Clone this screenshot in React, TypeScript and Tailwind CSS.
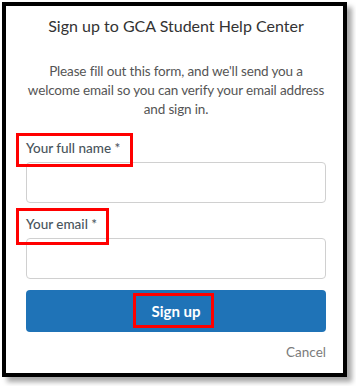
import React from 'react';

function Field({ label, boxW, boxH, boxTop, mt }: { label: string; boxW: number; boxH: number; boxTop: number; mt: string }) {
  return (
    <div className={mt}>
      <div className="relative h-[20px] leading-[20px] text-[13.5px] font-[500] text-[#49545c]">
        {label}
        <span
          className="absolute left-[-10px] border-[3px] border-[#ff0000] pointer-events-none"
          style={{ width: boxW, height: boxH, top: boxTop }}
        />
      </div>
      <input
        type="text"
        className="mt-[4px] block w-full h-[41px] rounded-[4px] border border-[#d0d0d0] bg-white outline-none"
      />
    </div>
  );
}

export default function App() {
  return (
    <div className="w-[356px] h-[386px] bg-white pt-[2px] pl-[2px]" style={{ fontFamily: 'Lato, "Open Sans", sans-serif' }}>
      <div className="w-[345px] h-[375px] border-[4px] border-black bg-white shadow-[5px_5px_5px_rgba(0,0,0,0.35)] pl-[20px] pr-[17px]">
        <h1 className="pt-[8px] text-center text-[16px] leading-[24px] text-[#333333]">
          Sign up to GCA Student Help Center
        </h1>
        <p className="mt-[24px] text-center text-[13.5px] tracking-[-0.15px] leading-[19px] text-[#555555]">
          Please fill out this form, and we'll send you a welcome email so you can verify your email address and sign in.
        </p>
        <Field label="Your full name *" boxW={117} boxH={34} boxTop={-5} mt="mt-[19px]" />
        <Field label="Your email *" boxW={93} boxH={37} boxTop={-6} mt="mt-[11px]" />
        <div className="relative mt-[11px]">
          <button className="block w-full h-[42px] rounded-[4px] bg-[#1f73b7] text-white text-[15px] font-bold">
            Sign up
          </button>
          <span className="absolute left-[107px] top-[3px] w-[81px] h-[35px] border-[3px] border-[#ff0000] pointer-events-none" />
        </div>
        <div className="mt-[10px] h-[20px] leading-[20px] text-right text-[13.5px] text-[#7b7b7b]">Cancel</div>
      </div>
    </div>
  );
}
